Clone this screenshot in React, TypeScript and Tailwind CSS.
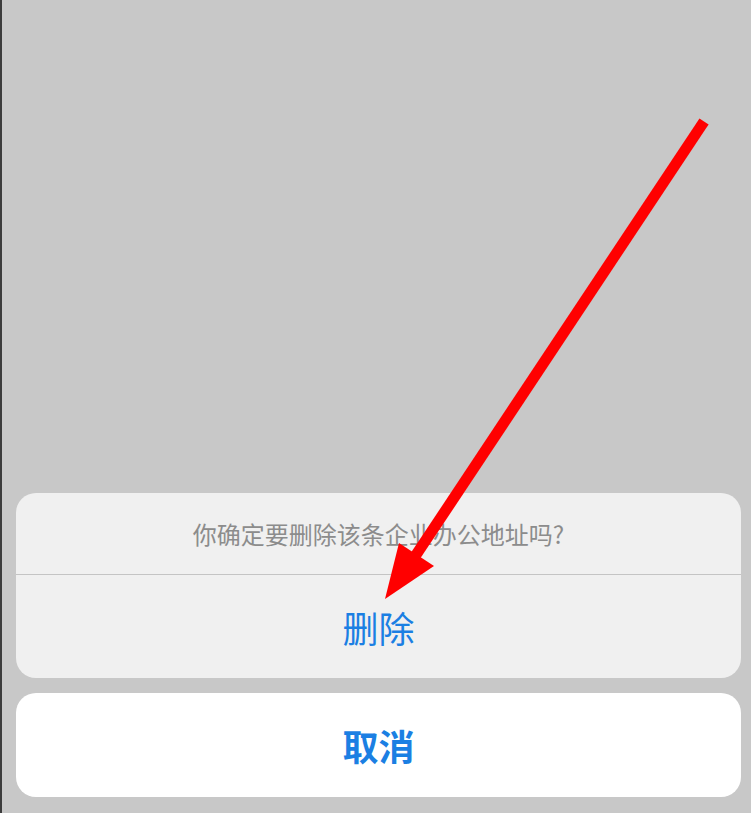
import React from "react"

function Arrow() {
  return (
    <svg className="pointer-events-none absolute inset-0" width="751" height="813" viewBox="0 0 751 813">
      <line x1="699" y1="126" x2="416" y2="552" stroke="#ff0000" strokeWidth="11" strokeLinecap="square" />
      <polygon points="383,599 397,543 432,566" fill="#ff0000" />
    </svg>
  )
}

export default function App() {
  return (
    <div
      className="relative flex h-[813px] w-[751px] flex-col justify-end overflow-hidden border-l-2 border-[#3c3c3c] bg-[#c8c8c8] pb-4 pl-[14px] pr-[10px]"
      style={{ fontFamily: '"Noto Sans CJK SC", "Noto Sans", sans-serif' }}
    >
      <div className="overflow-hidden rounded-[20px] bg-[#f0f0f0]">
        <div className="flex h-[81px] items-center justify-center text-[24px] text-[#8c8c8c]">
          你确定要删除该条企业办公地址吗?
        </div>
        <div className="h-px bg-[#c4c4c4]" />
        <button className="flex h-[103px] w-full items-center justify-center text-[36px] text-[#1b7fe3]">
          删除
        </button>
      </div>
      <button className="mt-[15px] flex h-[104px] w-full items-center justify-center rounded-[20px] bg-white text-[36px] font-bold text-[#1b7fe3]">
        取消
      </button>
      <Arrow />
    </div>
  )
}
